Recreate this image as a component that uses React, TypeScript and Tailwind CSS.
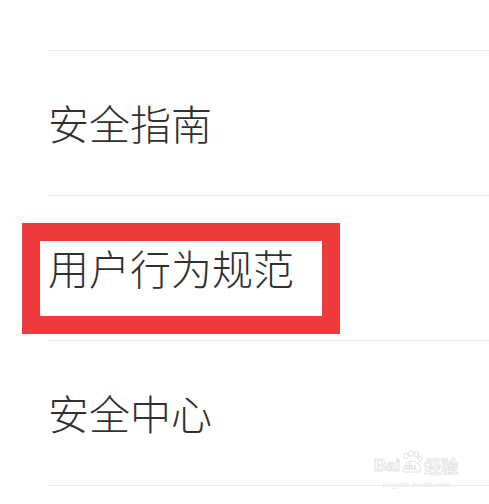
import React from "react";

const font = { fontFamily: '"Noto Sans CJK SC", "Noto Sans", sans-serif' };

function Row({ label, children }: { label: string; children?: React.ReactNode }) {
  return (
    <div className="relative">
      <div className="ml-12 border-t border-[#e9e9e9]" />
      <div className="h-[144px] flex items-center pl-12 pb-[2px]">
        <span className="text-[41px] leading-none text-[#303030] font-light">{label}</span>
      </div>
      {children}
    </div>
  );
}

export default function App() {
  return (
    <div className="relative w-[489px] h-[504px] bg-white overflow-hidden" style={font}>
      <div className="h-[50px]" />
      <Row label="安全指南" />
      <Row label="用户行为规范">
        <div className="absolute left-[22px] top-[28px] w-[318px] h-[111px] border-[18px] border-[#ee3a3b]" />
      </Row>
      <Row label="安全中心" />
      <div className="ml-12 border-t border-[#e9e9e9]" />

      <div className="absolute left-[370px] top-[450px] w-[92px] flex flex-col items-center select-none">
        <div className="flex items-end gap-[1px]">
          <span className="text-[17px] leading-none font-bold" style={{ fontFamily: '"Liberation Sans", sans-serif', WebkitTextStroke: "1px #e2e2e2", color: "#ffffff" }}>Bai</span>
          <div className="relative w-[22px] h-[24px]">
            <svg width="22" height="24" viewBox="0 0 22 24" className="absolute left-0 top-0">
              <g fill="none" stroke="#e2e2e2" strokeWidth="1">
                <ellipse cx="5" cy="6" rx="2.2" ry="3" />
                <ellipse cx="10" cy="3.5" rx="2.2" ry="3" />
                <ellipse cx="15.5" cy="4" rx="2.2" ry="3" />
                <ellipse cx="19" cy="9" rx="2" ry="2.6" />
                <path d="M3 22 C1 18 5 11 11 11 C17 11 21 18 19 22 Z" />
              </g>
            </svg>
            <span className="absolute left-[4px] top-[13px] text-[9px] leading-none font-bold" style={{ fontFamily: '"Liberation Sans", sans-serif', color: "#e0e0e0" }}>du</span>
          </div>
          <span className="text-[17px] leading-none font-bold" style={{ color: "#ffffff", WebkitTextStroke: "0.8px #e2e2e2" }}>经验</span>
        </div>
        <span className="text-[9px] leading-none mt-[6px] text-[#e8e8e8] italic" style={{ fontFamily: '"Liberation Serif", serif' }}>jingyan.baidu.com</span>
      </div>
    </div>
  );
}
